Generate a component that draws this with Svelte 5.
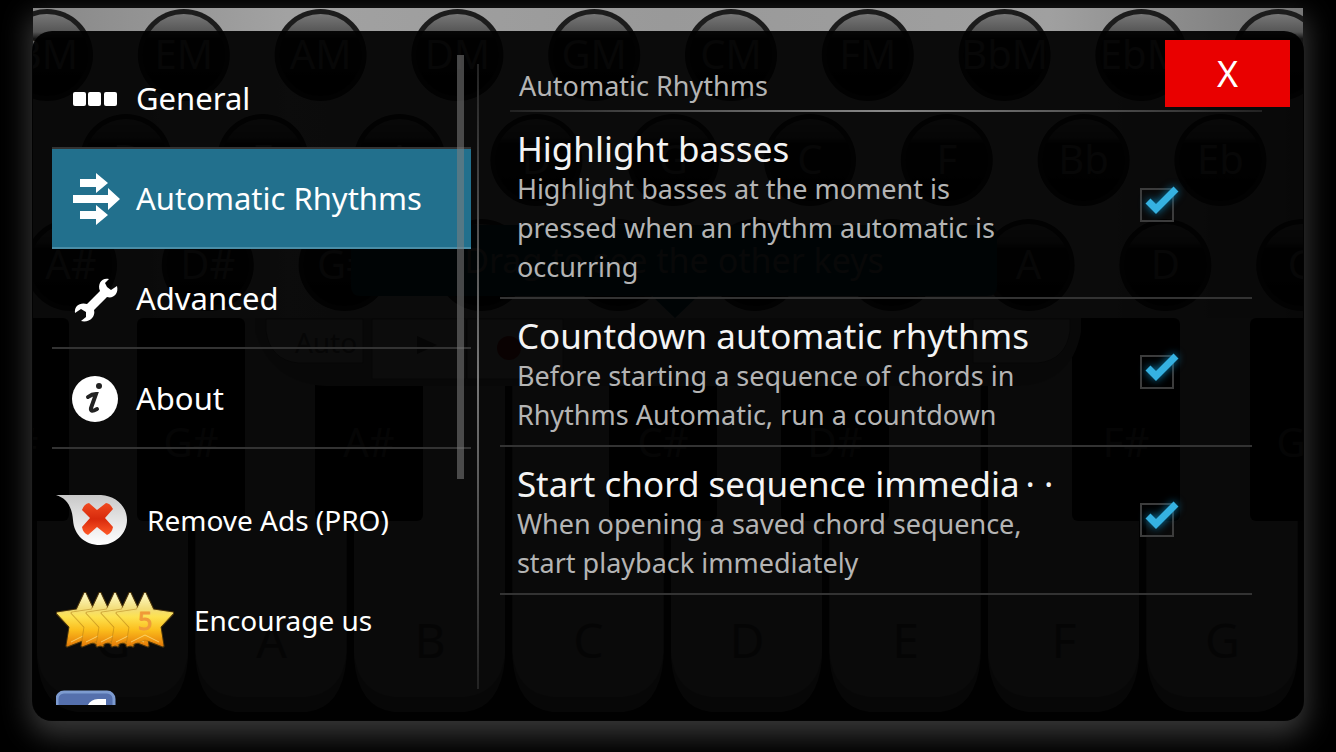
<script>
  let selected = $state('rhythms');

  const sections = [
    { id: 'general', label: 'General' },
    { id: 'rhythms', label: 'Automatic Rhythms' },
    { id: 'advanced', label: 'Advanced' },
    { id: 'about', label: 'About' }
  ];

  let options = $state([
    {
      id: 'highlight',
      title: 'Highlight basses',
      summary: 'Highlight basses at the moment is pressed when an rhythm automatic is occurring',
      checked: true
    },
    {
      id: 'countdown',
      title: 'Countdown automatic rhythms',
      summary: 'Before starting a sequence of chords in Rhythms Automatic, run a countdown',
      checked: true
    },
    {
      id: 'immediate',
      title: 'Start chord sequence immedia\u2009· ·',
      summary: 'When opening a saved chord sequence, start playback immediately',
      checked: true
    }
  ]);

  // Accordion behind the dialog, empty names sit under the hint banner
  const basses = [
    { y: 47, x: 14, names: ['BM', 'EM', 'AM', 'DM', 'GM', 'CM', 'FM', 'BbM', 'EbM', ''] },
    { y: 152, x: 93, names: ['B', 'E', 'A', 'D', 'G', 'C', 'F', 'Bb', 'Eb'] },
    { y: 257, x: 38, names: ['A#', 'D#', 'G#', '', '', '', '', 'A', 'D', 'G'] }
  ];
  const whiteKeys = ['G', 'A', 'B', 'C', 'D', 'E', 'F', 'G'];
  const blackKeys = [
    { x: -72, name: 'F#' },
    { x: 104, name: 'G#' },
    { x: 282, name: 'A#' },
    { x: 576, name: 'C#' },
    { x: 748, name: 'D#' },
    { x: 1039, name: 'F#' },
    { x: 1217, name: 'G#' }
  ];
  const star = 'M29 1 37 18 57 21 44 35 47 54 29 47 11 54 14 35 1 21 21 18Z';
</script>

<div class="app">
  <svg class="keyboard" viewBox="0 0 1270 712" preserveAspectRatio="none" aria-hidden="true">
    <defs>
      <linearGradient id="bass" x1="0" y1="0" x2="0" y2="1">
        <stop offset="0" stop-color="#777" />
        <stop offset=".22" stop-color="#555" />
        <stop offset=".3" stop-color="#161616" />
        <stop offset="1" stop-color="#080808" />
      </linearGradient>
      <linearGradient id="body" x1="0" y1="0" x2="1" y2="0">
        <stop offset="0" stop-color="#888" />
        <stop offset=".2" stop-color="#a2a2a2" />
        <stop offset=".5" stop-color="#999" />
        <stop offset=".8" stop-color="#a0a0a0" />
        <stop offset="1" stop-color="#777" />
      </linearGradient>
    </defs>
    <rect width="1270" height="310" fill="url(#body)" />
    <rect y="310" width="1270" height="402" fill="#111" />
    {#each whiteKeys as name, i}
      <path d="M{i * 158.5 + 4} 310h151v340q-4 50-40 54h-71q-36-4-40-54z" fill="#666" />
      <path d="M{i * 158.5 + 4} 310h151v335q-4 40-40 44h-71q-36-4-40-44z" fill="#888" />
      <text x={i * 158.5 + 80} y="650" font-size="48" fill="#4c4c4c">{name}</text>
    {/each}
    {#each blackKeys as key}
      <rect x={key.x} y="310" width="108" height="203" rx="6" fill="#060606" />
      <text x={key.x + 54} y="449" font-size="40" fill="#4c4c4c">{key.name}</text>
    {/each}
    {#each basses as row}
      {#each row.names as name, i}
        <circle cx={row.x + i * 136.8} cy={row.y} r="46" fill="#1c1c1c" />
        <circle cx={row.x + i * 136.8} cy={row.y} r="41" fill="url(#bass)" />
        <text x={row.x + i * 136.8} y={row.y + 14} font-size="40" fill="#606060">{name}</text>
      {/each}
    {/each}
    <path d="M222 310h826v14q-10 52-62 54H294q-56-2-72-54z" fill="#777" />
    <path d="M233 311h97v44h-65q-28-3-32-32zM339 311h94v60h-94zM434 311h96v60h-96zM940 311h97v12q-4 29-32 32h-65z" fill="#a5a5a5" stroke="#555" />
    <text x="293" y="345" font-size="28" fill="#555">Auto</text>
    <path d="M384 328l20 9-20 9z" fill="#444" />
    <circle cx="476" cy="340" r="12" fill="#822" />
    <path d="M328 217h626q10 0 10 10v51q0 10-10 10H665l-23 22-23-22H328q-10 0-10-10v-51q0-10 10-10z" fill="#00404e" />
    <text x="641" y="265" font-size="34" fill="#707070">Drag to see the other keys</text>
  </svg>

  <main class="dialog">
    <nav class="menu">
      <ul>
        {#each sections as section}
          <li>
            <button
              class="section"
              class:active={selected === section.id}
              onclick={() => (selected = section.id)}
            >
              <svg class="icon" viewBox="0 0 48 54" aria-hidden="true">
                {#if section.id === 'general'}
                  <rect x="1" y="21" width="13" height="14" rx="2" />
                  <rect x="16" y="21" width="13" height="14" rx="2" />
                  <rect x="32" y="21" width="13" height="14" rx="2" />
                {:else if section.id === 'rhythms'}
                  <path d="M8 8h16V2l12 10-12 10v-6H8zM1 24h35v-7l12 11-12 11v-7H1zM8 40h16v-6l12 10-12 10v-6H8z" />
                {:else if section.id === 'advanced'}
                  <path d="M37 8C30 6 25 13 28 20L15 33C8 31 2 35 3 42L9 38 14 41 14 46 9 50C17 52 24 46 22 39L35 26C41 28 47 23 45 15L39 19 35 16 33 12Z" />
                {:else}
                  <circle cx="23" cy="28" r="23" />
                  <circle class="ink" cx="27" cy="15" r="3" />
                  <path class="stroke" d="M16 26q4-3 8-3l-5 14q-1 5 6 1" />
                {/if}
              </svg>
              {section.label}
            </button>
          </li>
        {/each}
      </ul>
      <ul class="links">
        <li>
          <a href="#pro">
            <svg width="71" height="52" viewBox="0 0 71 52" aria-hidden="true">
              <defs>
                <linearGradient id="tag" x1="0" y1="0" x2="0" y2="1">
                  <stop offset="0" stop-color="#c8c8c8" />
                  <stop offset=".45" stop-color="#e2e2e2" />
                  <stop offset="1" stop-color="#fff" />
                </linearGradient>
                <linearGradient id="cross" x1="0" y1="0" x2="0" y2="1">
                  <stop offset="0" stop-color="#f04a20" />
                  <stop offset=".5" stop-color="#d82a0c" />
                  <stop offset="1" stop-color="#ff5a28" />
                </linearGradient>
              </defs>
              <path d="M0 1H45C60 2 71 12 71 26S59 51 44 51 18 41 17 26C16 12 10 4 0 1Z" fill="url(#tag)" />
              <path d="M33 9 41 16 50 9Q54 9 57 15L49 24 57 33Q56 39 51 41L41 33 32 41Q27 39 26 33L34 24 26 16Q28 10 33 9Z" fill="url(#cross)" />
            </svg>
            Remove Ads (PRO)
          </a>
        </li>
        <li>
          <a href="#rate">
            <svg width="118" height="56" viewBox="0 0 118 56" aria-hidden="true">
              <defs>
                <linearGradient id="gold" x1="0" y1="0" x2="0" y2="1">
                  <stop offset="0" stop-color="#fffcc8" />
                  <stop offset=".3" stop-color="#f2dc78" />
                  <stop offset=".45" stop-color="#fde250" />
                  <stop offset=".7" stop-color="#fbbd1c" />
                  <stop offset="1" stop-color="#e67c08" />
                </linearGradient>
              </defs>
              {#each [0, 1, 2, 3, 4] as n}
                <g transform="translate({n * 15} 0)">
                  <path d={star} fill="none" stroke="#a87410" stroke-opacity=".45" stroke-width="3" stroke-linejoin="round" />
                  <path d={star} fill="url(#gold)" stroke="url(#gold)" stroke-linejoin="round" />
                  <path d="M15 50 29 43 43 50" fill="none" stroke="#fff0a0" stroke-opacity=".6" />
                </g>
              {/each}
              <text x="82" y="38" font-size="25" fill="#f09a38" stroke="#f09a38">5</text>
            </svg>
            Encourage us
          </a>
        </li>
        <li>
          <a href="#facebook" aria-label="Facebook">
            <svg width="60" height="60" viewBox="0 0 60 60" aria-hidden="true">
              <rect x="1" y="2" width="57" height="57" rx="7" fill="#5570ad" stroke="#7d9bd0" stroke-width="3" />
              <path d="M50 9v9h-6q-4 0-4 5v6h9l-1 9h-8v21H30V38h-6v-9h6v-7q1-12 12-13z" fill="#fff" />
            </svg>
          </a>
        </li>
      </ul>
      <span class="scrollbar"></span>
    </nav>

    <section class="pane">
      <h1>Automatic Rhythms</h1>
      {#each options as option}
        <label class="option" for={option.id}>
          <span class="text">
            <span class="title">{option.title}</span>
            <span class="summary">{option.summary}</span>
          </span>
          <span class="check">
            <input id={option.id} type="checkbox" bind:checked={option.checked} />
            {#if option.checked}
              <svg viewBox="0 0 42 38" aria-hidden="true">
                <path d="M8 16 16 24 36 4" />
              </svg>
            {/if}
          </span>
        </label>
      {/each}
    </section>

    <button class="close">X</button>
  </main>
</div>

<style>
  :global(body) {
    background: #000;
  }

  .app {
    position: relative;
    box-sizing: border-box;
    height: 100vh;
    padding: 31px 32px;
    overflow: hidden;
    font-family: "Noto Sans", "Open Sans", sans-serif;
    color: #fff;
  }

  .keyboard {
    position: absolute;
    top: 8px;
    left: 33px;
    width: calc(100% - 66px);
    height: calc(100% - 40px);
    border-radius: 0 0 20px 20px;
    box-shadow: 0 12px 28px 4px #363636;
    text-anchor: middle;
  }

  .dialog {
    position: relative;
    box-sizing: border-box;
    display: flex;
    height: 100%;
    padding: 16px 20px;
    border-radius: 20px;
    background: rgba(0, 0, 0, 0.93);
  }

  .menu {
    position: relative;
    box-sizing: border-box;
    flex: 0 0 34%;
    padding-top: 2px;
    overflow: hidden;
  }

  ul {
    margin: 0;
    padding: 0;
    list-style: none;
  }

  .section {
    box-sizing: border-box;
    display: flex;
    align-items: center;
    gap: 16px;
    width: 100%;
    height: 100px;
    padding: 0 20px;
    border: 0;
    border-bottom: 2px solid #333;
    background: none;
    color: #fff;
    font: inherit;
    font-size: 31px;
    cursor: pointer;
  }

  .section.active {
    border-color: #4a8da6;
    background: #22708d;
  }

  .icon {
    width: 48px;
    height: 54px;
    fill: #fff;
  }

  .icon .ink {
    fill: #222;
  }

  .icon .stroke {
    fill: none;
    stroke: #222;
    stroke-width: 4;
    stroke-linecap: round;
  }

  .links {
    margin-top: 21px;
  }

  .links a {
    display: flex;
    align-items: center;
    gap: 20px;
    height: 100px;
    padding-left: 4px;
    color: #fff;
    font-size: 28px;
    text-decoration: none;
  }

  .scrollbar {
    position: absolute;
    top: 8px;
    right: 7px;
    width: 7px;
    height: 424px;
    background: rgba(128, 128, 128, 0.55);
  }

  .pane {
    flex: 1;
    margin: 17px 0 16px 6px;
    padding: 0 32px 0 21px;
    border-left: 2px solid;
    border-image: linear-gradient(#222, #777 50%, #222) 1;
  }

  h1 {
    margin: 0 -10px 0 10px;
    padding: 2px 0 4px 9px;
    border-bottom: 2px solid;
    border-image: linear-gradient(90deg, #222, #888 50%, #222) 1;
    color: #b4b4b4;
    font-size: 27px;
    font-weight: 400;
    line-height: 40px;
  }

  .option {
    display: flex;
    align-items: center;
    justify-content: space-between;
    padding: 17px 78px 11px 17px;
    border-bottom: 2px solid #333;
  }

  .text {
    max-width: 520px;
  }

  .title,
  .summary {
    display: block;
  }

  .title {
    color: #f4f4f4;
    font-size: 35px;
    line-height: 40px;
    white-space: nowrap;
  }

  .summary {
    color: #b4b4b4;
    font-size: 27px;
    line-height: 39px;
  }

  .check {
    position: relative;
    width: 34px;
    height: 34px;
    margin-bottom: 6px;
  }

  .check input {
    appearance: none;
    display: block;
    width: 34px;
    height: 34px;
    margin: 0;
    border: 2px solid #3c3c3c;
  }

  .check svg {
    position: absolute;
    top: -3px;
    left: 0;
    width: 42px;
    height: 38px;
    overflow: visible;
    fill: none;
    stroke: #35b1e1;
    stroke-width: 7;
    filter: drop-shadow(0 0 4px #0a7fb0);
    pointer-events: none;
  }

  .close {
    position: absolute;
    top: 9px;
    right: 14px;
    width: 125px;
    height: 67px;
    border: 0;
    background: #e90000;
    color: #fff;
    font: inherit;
    font-size: 36px;
    cursor: pointer;
  }
</style>
